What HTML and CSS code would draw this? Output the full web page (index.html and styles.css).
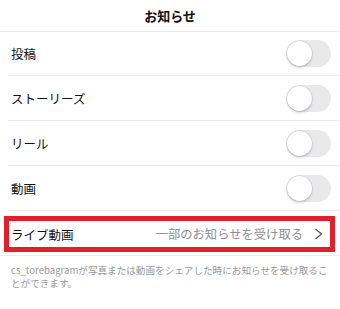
FILE: index.html
```html
<!DOCTYPE html>
<html lang="ja">
<head>
<meta charset="utf-8">
<link rel="stylesheet" href="styles.css">
</head>
<body>
<div class="page">
  <header class="header">お知らせ</header>
  <div class="row first">
    <span class="label">投稿</span>
    <span class="toggle"><span class="knob"></span></span>
  </div>
  <div class="row">
    <span class="label">ストーリーズ</span>
    <span class="toggle"><span class="knob"></span></span>
  </div>
  <div class="row">
    <span class="label">リール</span>
    <span class="toggle"><span class="knob"></span></span>
  </div>
  <div class="row">
    <span class="label">動画</span>
    <span class="toggle"><span class="knob"></span></span>
  </div>
  <div class="live-row">
    <div class="live-box">
      <span class="label">ライブ動画</span>
      <span class="value">一部のお知らせを受け取る</span>
      <svg class="chevron" width="9" height="12" viewBox="0 0 9 12"><path d="M1.5 1 L7.5 6 L1.5 11" fill="none" stroke="#555" stroke-width="1.2"/></svg>
    </div>
  </div>
  <p class="note">cs_torebagramが写真または動画をシェアした時にお知らせを受け取ることができます。</p>
</div>
</body>
</html>
```
FILE: styles.css
```css
html, body {
  margin: 0;
  padding: 0;
  background: #fff;
}
.page {
  width: 340px;
  font-family: "Noto Sans CJK JP", "Noto Sans", sans-serif;
  color: #111;
}
.header {
  height: 31px;
  display: flex;
  align-items: center;
  justify-content: center;
  font-size: 13px;
  font-weight: bold;
  border-bottom: 1px solid #ececec;
}
.row {
  height: 44px;
  margin-left: 8px;
  padding: 0 9px 0 3px;
  display: flex;
  align-items: center;
  justify-content: space-between;
  border-bottom: 1px solid #ececec;
}
.row.first {
  height: 43px;
}
.label {
  font-size: 12.5px;
}
.toggle {
  width: 45px;
  height: 27px;
  border-radius: 14px;
  background: #e9e9eb;
  display: flex;
  align-items: center;
  padding-left: 1px;
  box-sizing: border-box;
}
.knob {
  width: 25px;
  height: 25px;
  border-radius: 50%;
  background: #fff;
  box-shadow: 0 0 0 0.5px rgba(0,0,0,0.12), 0 2px 3px rgba(0,0,0,0.15);
}
.live-row {
  height: 45px;
  padding: 5px 5px 3px 4px;
  box-sizing: border-box;
  border-bottom: 1px solid #ececec;
}
.live-box {
  height: 100%;
  box-sizing: border-box;
  border: 5px solid #e0202c;
  display: flex;
  align-items: center;
  padding: 0 7px 0 2px;
}
.live-box .label {
  flex: 1;
}
.value {
  font-size: 12.3px;
  color: #8e8e8e;
  margin-right: 11px;
}
.chevron {
  display: block;
}
.note {
  margin: 0;
  padding: 8px 6px 0 11px;
  font-size: 9.6px;
  line-height: 13px;
  color: #999;
}
```
